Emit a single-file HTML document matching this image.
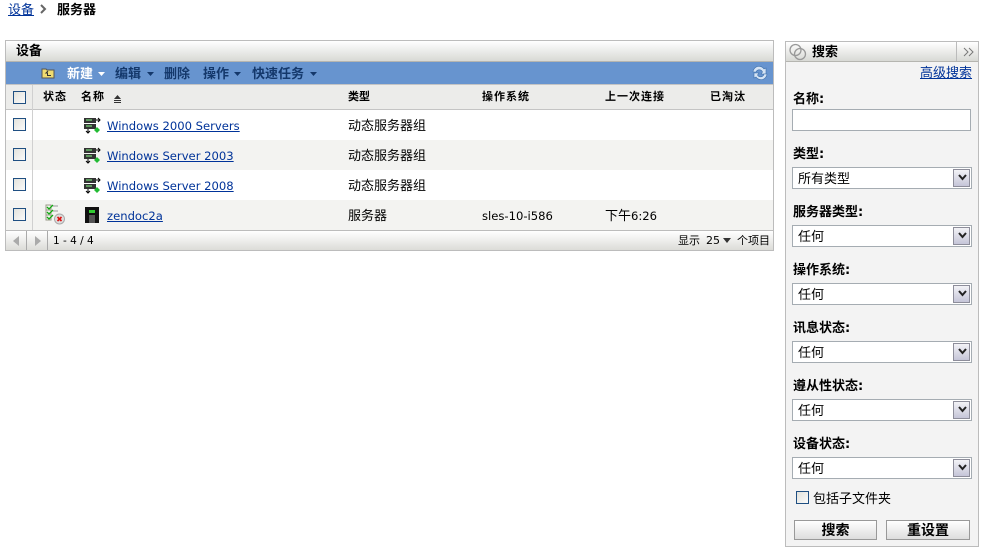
<!DOCTYPE html>
<html lang="zh"><head><meta charset="utf-8"><title>服务器</title>
<style>
html,body{margin:0;padding:0;background:#fff}
body{position:relative;width:983px;height:556px;overflow:hidden;font:13px/16px "DejaVu Sans","WenQuanYi Zen Hei","Noto Sans CJK SC",sans-serif;color:#000}
div,a,span,svg{position:absolute;white-space:nowrap}
span.l{position:static;font-size:11.6px}
a{color:#003399;text-decoration:underline}
.b{font-weight:bold}
.cb{width:11px;height:11px;border:1px solid #1f4f82;background:linear-gradient(135deg,#e2e2dc,#fafafa)}
.lnk{left:107px;font-size:11.6px}
.ty{left:348px}
.h{top:89px;font-size:11px;font-weight:bold;letter-spacing:1px}
.lb{left:793px;font-weight:bold}
.sel{left:792px;width:178px;height:20px;border:1px solid #a5acb2;background:#fff}
.sel span{left:5px;top:4px}
.ar{right:1px;top:1px;width:15px;height:16px;border:1px solid #8d8d9a;background:linear-gradient(#f2f2f6,#c5c5d8)}
.btn{top:520px;height:18px;border:1px solid #999;background:linear-gradient(#fff,#ddd);text-align:center;font-size:14px;line-height:20px;font-weight:bold}
.m{top:67px;font-weight:bold;color:#14386b}
</style></head><body>
<a style="left:8px;top:3px">设备</a>
<svg style="left:40px;top:4px" width="8" height="10"><path d="M1 1l4 4-4 4" fill="none" stroke="#666" stroke-width="2"/></svg>
<div class="b" style="left:57px;top:3px">服务器</div>

<div style="left:5px;top:40px;width:767px;height:209px;border:1px solid #bcbcbc;background:#fff"></div>
<div style="left:6px;top:41px;width:767px;height:20px;background:linear-gradient(#fff,#d8d9d5);border-bottom:1px solid #b5b5b0"></div>
<div class="b" style="left:16px;top:44px">设备</div>
<div style="left:6px;top:62px;width:767px;height:22px;background:#6794cf"></div>
<svg style="left:41px;top:67px" width="14" height="12"><path d="M1 2h4l1 1h7v8H1z" fill="#f0dc70" stroke="#555"/><path d="M7 4L5 6h1.500v2.500H10" fill="none" stroke="#333"/></svg>
<div class="m" style="left:67px;color:#fff">新建</div>
<svg style="left:98px;top:72px" width="8" height="4"><path d="M0 0h7L3.500 4z" fill="#fff"/></svg>
<div class="m" style="left:115px">编辑</div>
<svg style="left:147px;top:72px" width="8" height="4"><path d="M0 0h7L3.500 4z" fill="#14386b"/></svg>
<div class="m" style="left:164px">删除</div>
<div class="m" style="left:203px">操作</div>
<svg style="left:234px;top:72px" width="8" height="4"><path d="M0 0h7L3.500 4z" fill="#14386b"/></svg>
<div class="m" style="left:252px">快速任务</div>
<svg style="left:310px;top:72px" width="8" height="4"><path d="M0 0h7L3.500 4z" fill="#14386b"/></svg>
<svg style="left:752px;top:65px" width="16" height="16"><path d="M1 7a6 6 0 0 1 11-3l2-1v6H9l1.500-2A3.500 3.500 0 0 0 4 7z" fill="#d5e4f5" stroke="#3d6ea8" stroke-width=".6"/><path d="M15 9a6 6 0 0 1-11 3l-2 1V8h5L5.500 10A3.500 3.500 0 0 0 12 9z" fill="#d5e4f5" stroke="#3d6ea8" stroke-width=".6"/></svg>

<div style="left:6px;top:84px;width:767px;height:24px;background:#ececea;border-top:1px solid #c4c4c4;border-bottom:1px solid #c4c4c4"></div>
<div style="left:32px;top:85px;width:1px;height:145px;background:#d0d0d0"></div>
<div class="cb" style="left:13px;top:91px"></div>
<div class="h" style="left:43px">状态</div>
<div class="h" style="left:81px">名称</div>
<svg style="left:114px;top:95px" width="8" height="8"><path d="M0 4L3.500 0 7 4zM0 5h7v1H0zM0 7h7v1H0z" fill="#333"/></svg>
<div class="h" style="left:348px;letter-spacing:0">类型</div>
<div class="h" style="left:482px;letter-spacing:1px">操作系统</div>
<div class="h" style="left:605px;letter-spacing:1px">上一次连接</div>
<div class="h" style="left:710px;letter-spacing:1px">已淘汰</div>

<div style="left:6px;top:140px;width:767px;height:30px;background:#f3f3f1"></div>
<div style="left:6px;top:200px;width:767px;height:30px;background:#f3f3f1"></div>
<div style="left:32px;top:110px;width:1px;height:120px;background:#d0d0d0"></div>

<div class="cb" style="left:13px;top:118px"></div>
<div class="cb" style="left:13px;top:148px"></div>
<div class="cb" style="left:13px;top:178px"></div>
<div class="cb" style="left:13px;top:208px"></div>

<svg style="left:84px;top:117px" width="17" height="17"><path d="M0 1h12v5H0zM0 7h12v5H0z" fill="#333"/><path d="M2 3h6M2 9h6" stroke="#8f8"/><path d="M12 3h4M14 1l2 2-2 2M4 12v4M2 14l2 2 2-2" fill="none" stroke="#000"/><path d="M13 10l3 3-3 3-3-3z" fill="#2b3"/></svg>
<svg style="left:84px;top:147px" width="17" height="17"><path d="M0 1h12v5H0zM0 7h12v5H0z" fill="#333"/><path d="M2 3h6M2 9h6" stroke="#8f8"/><path d="M12 3h4M14 1l2 2-2 2M4 12v4M2 14l2 2 2-2" fill="none" stroke="#000"/><path d="M13 10l3 3-3 3-3-3z" fill="#2b3"/></svg>
<svg style="left:84px;top:177px" width="17" height="17"><path d="M0 1h12v5H0zM0 7h12v5H0z" fill="#333"/><path d="M2 3h6M2 9h6" stroke="#8f8"/><path d="M12 3h4M14 1l2 2-2 2M4 12v4M2 14l2 2 2-2" fill="none" stroke="#000"/><path d="M13 10l3 3-3 3-3-3z" fill="#2b3"/></svg>
<svg style="left:85px;top:207px" width="14" height="16"><path d="M0 0h14v16H0z" fill="#111"/><path d="M4 3h6v3H4z" fill="#3c3"/><path d="M5 8v8M7 8v8M9 8v8" stroke="#999"/></svg>
<svg style="left:45px;top:204px" width="21" height="21"><path d="M1 1h5v5H1zM1 6h5v5H1zM1 11h5v5H1z" fill="none" stroke="#998"/><path d="M2 3l2 2 4-4M2 8l2 2 4-4M2 13l2 2 4-4" fill="none" stroke="#1a1" stroke-width="1.300"/><path d="M8 2h5M8 7h5" stroke="#999"/><circle cx="14.500" cy="15" r="5" fill="#ddd" stroke="#aaa"/><path d="M12.500 13l4 4M16.500 13l-4 4" stroke="#d11" stroke-width="1.600"/></svg>

<a class="lnk" style="top:118px">Windows 2000 Servers</a>
<a class="lnk" style="top:148px">Windows Server 2003</a>
<a class="lnk" style="top:178px">Windows Server 2008</a>
<a class="lnk" style="top:208px">zendoc2a</a>
<div class="ty" style="top:119px">动态服务器组</div>
<div class="ty" style="top:149px">动态服务器组</div>
<div class="ty" style="top:179px">动态服务器组</div>
<div class="ty" style="top:209px">服务器</div>
<div style="left:482px;top:208px;font-size:11.6px">sles-10-i586</div>
<div style="left:605px;top:208px">下午<span class="l">6:26</span></div>

<div style="left:6px;top:230px;width:767px;height:19px;background:linear-gradient(#fff,#dcdcd8);border-top:1px solid #bcbcbc"></div>
<div style="left:26px;top:231px;width:1px;height:19px;background:#aaa"></div>
<div style="left:47px;top:231px;width:1px;height:19px;background:#aaa"></div>
<svg style="left:12px;top:236px" width="8" height="10"><path d="M7 0v10L1 5z" fill="#aaa"/></svg>
<svg style="left:34px;top:236px" width="8" height="10"><path d="M1 0v10l6-5z" fill="#aaa"/></svg>
<div style="left:53px;top:233px;font-size:10.500px">1 - 4 / 4</div>
<div style="left:678px;top:233px;font-size:11px">显示</div>
<div style="left:706px;top:233px;font-size:11px">25</div>
<svg style="left:723px;top:238px" width="8" height="5"><path d="M0 0h8L4 5z" fill="#333"/></svg>
<div style="left:737px;top:233px;font-size:11px">个项目</div>

<div style="left:785px;top:41px;width:192px;height:504px;border:1px solid #bcbcbc;background:#f3f3f3"></div>
<div style="left:786px;top:42px;width:192px;height:19px;background:linear-gradient(#fff,#d8d9d5);border-bottom:1px solid #b5b5b0"></div>
<div style="left:956px;top:42px;width:1px;height:19px;background:#bbb"></div>
<svg style="left:789px;top:43px" width="18" height="18"><circle cx="6.500" cy="7" r="5.500" fill="none" stroke="#999" stroke-width="1.300"/><circle cx="11" cy="11" r="5.500" fill="none" stroke="#999" stroke-width="1.300"/></svg>
<svg style="left:963px;top:47px" width="11" height="10"><path d="M1 1l4 4-4 4M6 1l4 4-4 4" fill="none" stroke="#777"/></svg>
<div class="b" style="left:812px;top:45px">搜索</div>
<a style="left:920px;top:66px">高级搜索</a>

<div class="lb" style="top:92px">名称:</div>
<div style="left:792px;top:109px;width:177px;height:20px;border:1px solid #a5acb2;background:#fff"></div>
<div class="lb" style="top:147px">类型:</div>
<div class="sel" style="top:167px"><span>所有类型</span><i class="ar" style="position:absolute"></i></div>
<div class="lb" style="top:205px">服务器类型:</div>
<div class="sel" style="top:225px"><span>任何</span><i class="ar" style="position:absolute"></i></div>
<div class="lb" style="top:263px">操作系统:</div>
<div class="sel" style="top:283px"><span>任何</span><i class="ar" style="position:absolute"></i></div>
<div class="lb" style="top:321px">讯息状态:</div>
<div class="sel" style="top:341px"><span>任何</span><i class="ar" style="position:absolute"></i></div>
<div class="lb" style="top:379px">遵从性状态:</div>
<div class="sel" style="top:399px"><span>任何</span><i class="ar" style="position:absolute"></i></div>
<div class="lb" style="top:437px">设备状态:</div>
<div class="sel" style="top:457px"><span>任何</span><i class="ar" style="position:absolute"></i></div>
<svg style="left:957px;top:174px" width="11" height="8"><path d="M2 1l3.500 4L9 1" fill="none" stroke="#222" stroke-width="2"/></svg>
<svg style="left:957px;top:232px" width="11" height="8"><path d="M2 1l3.500 4L9 1" fill="none" stroke="#222" stroke-width="2"/></svg>
<svg style="left:957px;top:290px" width="11" height="8"><path d="M2 1l3.500 4L9 1" fill="none" stroke="#222" stroke-width="2"/></svg>
<svg style="left:957px;top:348px" width="11" height="8"><path d="M2 1l3.500 4L9 1" fill="none" stroke="#222" stroke-width="2"/></svg>
<svg style="left:957px;top:406px" width="11" height="8"><path d="M2 1l3.500 4L9 1" fill="none" stroke="#222" stroke-width="2"/></svg>
<svg style="left:957px;top:464px" width="11" height="8"><path d="M2 1l3.500 4L9 1" fill="none" stroke="#222" stroke-width="2"/></svg>
<div class="cb" style="left:796px;top:491px"></div>
<div style="left:813px;top:492px">包括子文件夹</div>
<div class="btn" style="left:794px;width:81px">搜索</div>
<div class="btn" style="left:886px;width:82px">重设置</div>
</body></html>
